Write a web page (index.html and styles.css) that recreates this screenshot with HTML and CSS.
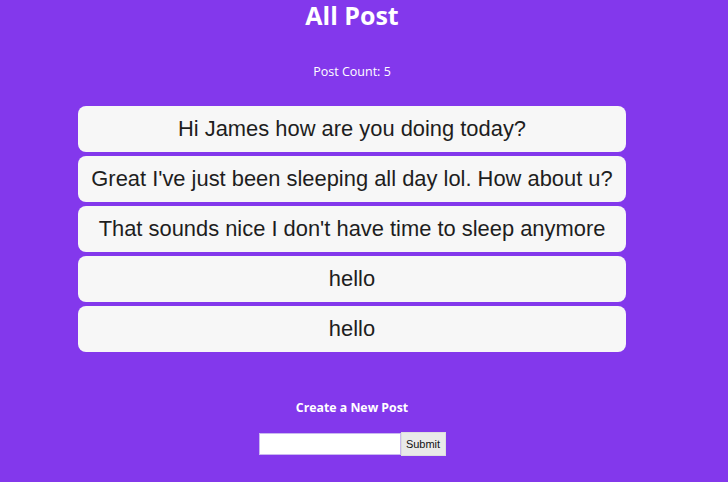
FILE: index.html
```html
<!DOCTYPE html>
<html>
<head>
<meta charset="utf-8">
<link rel="stylesheet" href="styles.css">
</head>
<body>
<div class="page">
  <h1 class="title">All Post</h1>
  <p class="count">Post Count: 5</p>
  <div class="posts">
    <div class="post">Hi James how are you doing today?</div>
    <div class="post">Great I've just been sleeping all day lol. How about u?</div>
    <div class="post">That sounds nice I don't have time to sleep anymore</div>
    <div class="post">hello</div>
    <div class="post">hello</div>
  </div>
  <h2 class="create">Create a New Post</h2>
  <form class="form">
    <input class="field" type="text"><button class="submit" type="button">Submit</button>
  </form>
</div>
</body>
</html>
```
FILE: styles.css
```css
html, body {
  margin: 0;
  padding: 0;
  background: #8338ec;
  height: 100%;
  overflow: hidden;
}
.page {
  width: 704px;
  display: flex;
  flex-direction: column;
  align-items: center;
  font-family: "Open Sans", "Noto Sans", sans-serif;
  color: #fff;
}
.title {
  margin: 0;
  padding-top: 1px;
  height: 31px;
  line-height: 29px;
  font-size: 25px;
  font-weight: 700;
}
.count {
  margin: 31px 0 0;
  font-size: 12.5px;
  line-height: 17px;
}
.posts {
  margin-top: 26px;
  width: 548px;
  display: flex;
  flex-direction: column;
  gap: 4px;
}
.post {
  height: 46px;
  border-radius: 8px;
  background: #f7f7f7;
  color: #1e1e1e;
  font-family: "Liberation Sans", Arial, sans-serif;
  font-size: 21.9px;
  display: flex;
  align-items: center;
  justify-content: center;
}
.create {
  margin: 48px 0 0;
  font-size: 12.3px;
  line-height: 16px;
  font-weight: 700;
}
.form {
  margin-top: 16px;
  display: flex;
  align-items: center;
}
.field {
  width: 142px;
  height: 22px;
  box-sizing: border-box;
  border: 1px solid #c9b8f0;
  background: #fff;
  margin: 0;
  padding: 0;
}
.submit {
  height: 24px;
  width: 45px;
  box-sizing: border-box;
  border: 1px solid #ddd;
  background: #e9e9e9;
  color: #111;
  font-family: "Liberation Sans", Arial, sans-serif;
  font-size: 11px;
  padding: 0;
  margin: 0;
}
```
